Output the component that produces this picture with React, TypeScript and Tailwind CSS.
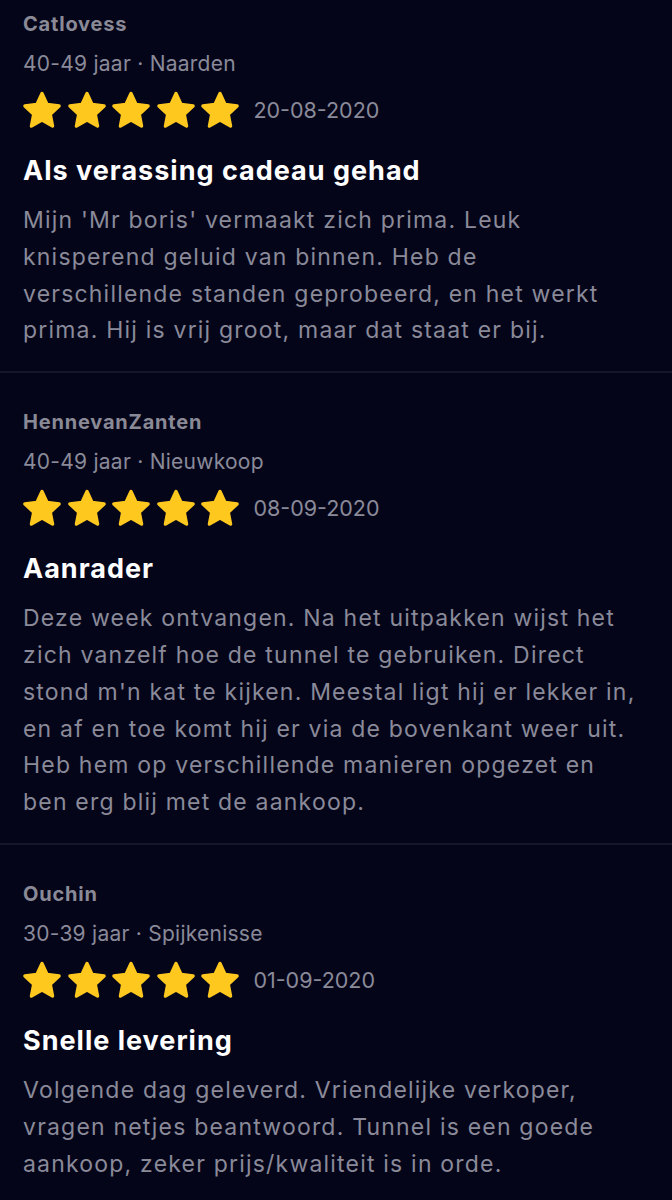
import React from "react";

type Review = {
  name: string;
  meta: string;
  date: string;
  title: string;
  body: string;
};

const reviews: Review[] = [
  {
    name: "Catlovess",
    meta: "40-49 jaar · Naarden",
    date: "20-08-2020",
    title: "Als verassing cadeau gehad",
    body: "Mijn 'Mr boris' vermaakt zich prima. Leuk knisperend geluid van binnen. Heb de verschillende standen geprobeerd, en het werkt prima. Hij is vrij groot, maar dat staat er bij.",
  },
  {
    name: "HennevanZanten",
    meta: "40-49 jaar · Nieuwkoop",
    date: "08-09-2020",
    title: "Aanrader",
    body: "Deze week ontvangen. Na het uitpakken wijst het zich vanzelf hoe de tunnel te gebruiken. Direct stond m'n kat te kijken. Meestal ligt hij er lekker in, en af en toe komt hij er via de bovenkant weer uit. Heb hem op verschillende manieren opgezet en ben erg blij met de aankoop.",
  },
  {
    name: "Ouchin",
    meta: "30-39 jaar · Spijkenisse",
    date: "01-09-2020",
    title: "Snelle levering",
    body: "Volgende dag geleverd. Vriendelijke verkoper, vragen netjes beantwoord. Tunnel is een goede aankoop, zeker prijs/kwaliteit is in orde.",
  },
];

function Star() {
  return (
    <svg width="40" height="40" viewBox="0 0 24 24" className="shrink-0">
      <path
        d="M12 2.1L15.06 8.69L22.27 9.56L16.95 14.51L18.35 21.64L12 18.1L5.65 21.64L7.05 14.51L1.73 9.56L8.94 8.69Z"
        fill="#ffc81e"
        stroke="#ffc81e"
        strokeWidth="2"
        strokeLinejoin="round"
      />
    </svg>
  );
}

function ReviewItem({ r, first }: { r: Review; first: boolean }) {
  return (
    <div
      className={`border-b-2 border-[#16162a] px-[23px] pb-[22px] ${first ? "pt-[12px]" : "pt-[37px]"}`}
    >
      <div className="text-[20px] font-bold leading-[24px] tracking-[0.8px] text-[#8a8a96]">
        {r.name}
      </div>
      <div className="mt-[14px] text-[21px] leading-[28px] tracking-[0.25px] text-[#8a8a99]">
        {r.meta}
      </div>
      <div className="mt-[12px] flex h-[40px] items-center">
        <div className="ml-[-1px] flex gap-[4.6px]">
          <Star />
          <Star />
          <Star />
          <Star />
          <Star />
        </div>
        <span className="ml-[13px] text-[21.5px] leading-[28px] text-[#8a8a99]">{r.date}</span>
      </div>
      <div className="mt-[24px] text-[27px] font-bold leading-[34px] tracking-[1px] text-white">
        {r.title}
      </div>
      <p className="mt-[14px] pr-[9px] text-[23px] leading-[36.8px] tracking-[1.2px] text-[#8a8a99]">
        {r.body}
      </p>
    </div>
  );
}

export default function App() {
  return (
    <div
      className="min-h-[1200px] w-[672px] bg-[#05051a]"
      style={{ fontFamily: "Inter, 'Noto Sans', sans-serif" }}
    >
      {reviews.map((r, i) => (
        <ReviewItem key={i} r={r} first={i === 0} />
      ))}
    </div>
  );
}
